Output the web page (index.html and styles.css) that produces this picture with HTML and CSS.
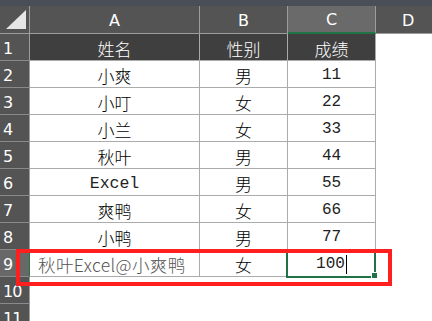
FILE: index.html
```html
<!DOCTYPE html>
<html lang="zh">
<head>
<meta charset="utf-8">
<title>Sheet</title>
<link rel="stylesheet" href="styles.css">
</head>
<body>
<div class="topbar"></div>
<div class="sheet">
  <div class="hd corner"><span class="tri"></span></div>
  <div class="hd col">A</div>
  <div class="hd col">B</div>
  <div class="hd col sel">C</div>
  <div class="hd col last">D</div>

  <div class="rh">1</div>
  <div class="c dark">姓名</div>
  <div class="c dark">性别</div>
  <div class="c dark">成绩</div>
  <div class="e"></div>

  <div class="rh">2</div>
  <div class="c">小爽</div>
  <div class="c">男</div>
  <div class="c num">11</div>
  <div class="e"></div>

  <div class="rh">3</div>
  <div class="c">小叮</div>
  <div class="c">女</div>
  <div class="c num">22</div>
  <div class="e"></div>

  <div class="rh">4</div>
  <div class="c">小兰</div>
  <div class="c">女</div>
  <div class="c num">33</div>
  <div class="e"></div>

  <div class="rh">5</div>
  <div class="c">秋叶</div>
  <div class="c">男</div>
  <div class="c num">44</div>
  <div class="e"></div>

  <div class="rh">6</div>
  <div class="c mono">Excel</div>
  <div class="c">男</div>
  <div class="c num">55</div>
  <div class="e"></div>

  <div class="rh">7</div>
  <div class="c">爽鸭</div>
  <div class="c">女</div>
  <div class="c num">66</div>
  <div class="e"></div>

  <div class="rh">8</div>
  <div class="c">小鸭</div>
  <div class="c">男</div>
  <div class="c num">77</div>
  <div class="e"></div>

  <div class="rh rsel">9</div>
  <div class="c left">秋叶Excel@小爽鸭</div>
  <div class="c">女</div>
  <div class="c num edit">100<span class="caret"></span><span class="handle"></span></div>
  <div class="e"></div>

  <div class="rh">10</div>
  <div class="e"></div>
  <div class="e"></div>
  <div class="e"></div>
  <div class="e"></div>

  <div class="rh">11</div>
  <div class="e"></div>
  <div class="e"></div>
  <div class="e"></div>
  <div class="e"></div>

  <div class="redbox"></div>
</div>
</body>
</html>
```
FILE: styles.css
```css
html, body {
  margin: 0;
  padding: 0;
  background: #ffffff;
  overflow: hidden;
}
body {
  width: 432px;
  height: 321px;
  font-family: "Noto Sans CJK SC", "Noto Sans", sans-serif;
}
.topbar {
  height: 6px;
  background: #4a4e56;
}
.sheet {
  position: relative;
  display: grid;
  grid-template-columns: 30px 170px 88px 88px 1fr;
  grid-template-rows: 28px;
  grid-auto-rows: 27px;
}
.hd {
  background: #545454;
  color: #ffffff;
  box-sizing: border-box;
  border-right: 1px solid #9c9c9c;
  border-bottom: 1px solid #9c9c9c;
  display: flex;
  align-items: center;
  justify-content: center;
  font-family: "DejaVu Sans", sans-serif;
  font-size: 16px;
  padding-top: 1px;
}
.hd.last {
  border-right: none;
  justify-content: flex-start;
  padding-left: 26px;
}
.hd.sel {
  background: #6a6a6a;
  border-bottom: 2px solid #217346;
}
.corner {
  position: relative;
}
.tri {
  position: absolute;
  left: 6px;
  top: 4px;
  width: 20px;
  height: 19px;
  background: #e6e6e6;
  clip-path: polygon(100% 0, 100% 100%, 0 100%);
}
.rh {
  background: #545454;
  color: #ffffff;
  box-sizing: border-box;
  border-right: 1px solid #9c9c9c;
  border-bottom: 1px solid #8a8a8a;
  font-family: "DejaVu Sans", sans-serif;
  font-size: 16px;
  padding-left: 3px;
  display: flex;
  align-items: center;
  padding-top: 2px;
  letter-spacing: -1px;
}
.rh.rsel {
  background: #686868;
  border-right: 1px solid #217346;
}
.c {
  box-sizing: border-box;
  border-right: 1px solid #ababab;
  border-bottom: 1px solid #ababab;
  display: flex;
  align-items: center;
  justify-content: center;
  font-size: 17px;
  font-weight: 300;
  color: #000000;
  padding-top: 2px;
}
.c.dark {
  background: #3f3f3f;
  color: #ffffff;
}
.c.num {
  font-family: "Liberation Mono", monospace;
  font-weight: 400;
  font-size: 16px;
  color: #222222;
}
.c.mono {
  font-family: "Liberation Mono", monospace;
  font-weight: 400;
  font-size: 16.5px;
  color: #222222;
}
.c.left {
  justify-content: flex-start;
  padding-left: 8px;
  color: #555555;
  font-weight: 300;
  font-size: 17.5px;
  letter-spacing: 0.4px;
  white-space: nowrap;
}
.c.edit {
  position: relative;
}
.c.edit::after {
  content: "";
  position: absolute;
  left: -2px;
  top: 1px;
  right: -1px;
  bottom: -2px;
  border: 2px solid #217346;
}
.caret {
  display: inline-block;
  width: 1px;
  height: 19px;
  background: #000000;
  margin-left: 1px;
}
.handle {
  position: absolute;
  right: -3px;
  bottom: -3px;
  width: 5px;
  height: 5px;
  background: #217346;
  border: 1px solid #ffffff;
  z-index: 2;
}
.e {
  background: #ffffff;
}
.redbox {
  position: absolute;
  left: 16px;
  top: 243px;
  width: 376px;
  height: 37px;
  box-sizing: border-box;
  border: 4px solid #ff1f1f;
  pointer-events: none;
}
```
